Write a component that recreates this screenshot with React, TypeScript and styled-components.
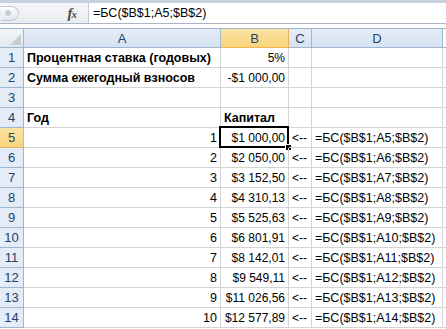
import styled, { createGlobalStyle, css } from "styled-components";

const GlobalStyle = createGlobalStyle`
  html, body {
    margin: 0;
    padding: 0;
    background: #ffffff;
    overflow: hidden;
  }
  body {
    font-family: "Liberation Sans", Arial, sans-serif;
  }
`;

const COLS = "24px 197px 68px 23px 131px 3px";

const Sheet = styled.div`
  width: 446px;
  height: 329px;
  overflow: hidden;
  background: #ffffff;
`;

const FormulaBar = styled.div`
  display: flex;
  height: 24px;
  border-top: 3px solid #c5d1de;
  border-bottom: 1px solid #a9b5c4;
  box-sizing: border-box;
  background: #ffffff;
`;

const FxArea = styled.div`
  width: 89px;
  display: flex;
  align-items: center;
  background: linear-gradient(#f6f7f9, #e9ecf0);
  border-right: 1px solid #c2c9d3;
  box-sizing: border-box;
`;

const Grip = styled.div`
  width: 18px;
  height: 15px;
  margin-left: 1px;
  border-radius: 0 8px 8px 0;
  border: 1px solid #c4cad3;
  border-left: none;
  background: linear-gradient(#ffffff, #e2e6eb);
  display: flex;
  align-items: center;
  padding-left: 4px;
  box-sizing: border-box;
`;

const Dot = styled.span`
  width: 6px;
  height: 6px;
  border-radius: 50%;
  background: #c9ced6;
`;

const Fx = styled.span`
  margin-left: auto;
  margin-right: 12px;
  font-family: "Liberation Serif", serif;
  font-style: italic;
  font-weight: bold;
  font-size: 15px;
  color: #4a4a4a;
  letter-spacing: -1px;

  small {
    font-size: 11px;
  }
`;

const FormulaText = styled.div`
  padding-left: 4px;
  display: flex;
  align-items: center;
  font-size: 12.5px;
  color: #000000;
`;

const Gap = styled.div`
  height: 4px;
  background: #ffffff;
  border-bottom: 1px solid #9eb6ce;
`;

const Grid = styled.div`
  display: grid;
  grid-template-columns: ${COLS};
  grid-auto-rows: 20px;
`;

const HeadRow = styled.div`
  display: grid;
  grid-template-columns: ${COLS};
  height: 19px;
`;

const Corner = styled.div`
  position: relative;
  background: linear-gradient(#f4f6f9, #e3e8ef);
  border-right: 1px solid #9eb6ce;
  border-bottom: 1px solid #9eb6ce;
  box-sizing: border-box;

  &::after {
    content: "";
    position: absolute;
    right: 2px;
    bottom: 2px;
    border-left: 11px solid transparent;
    border-bottom: 11px solid #c6cdd6;
  }
`;

const ColHead = styled.div<{ $active?: boolean }>`
  display: flex;
  align-items: center;
  justify-content: center;
  font-size: 13px;
  color: #27416a;
  border-right: 1px solid #9eb6ce;
  border-bottom: 1px solid #9eb6ce;
  box-sizing: border-box;
  background: linear-gradient(#e4ecf7, #d7e3f2);
  ${({ $active }) =>
    $active &&
    css`
      background: linear-gradient(#fbe3a3, #f8d57e);
      border-bottom-color: #f2b44b;
      border-right-color: #e3b45c;
    `}
`;

const Filler = styled.div`
  background: #ffffff;
  border-bottom: 1px solid #9eb6ce;
`;

const RowHead = styled.div<{ $active?: boolean }>`
  display: flex;
  align-items: center;
  justify-content: center;
  font-size: 13px;
  color: #27416a;
  background: #e4ecf7;
  border-right: 1px solid #9eb6ce;
  border-bottom: 1px solid #9eb6ce;
  box-sizing: border-box;
  ${({ $active }) =>
    $active &&
    css`
      background: linear-gradient(#fbe3a3, #f8d57e);
      border-right-color: #f2b44b;
      border-bottom-color: #e3b45c;
    `}
`;

const Cell = styled.div<{
  $align?: "left" | "right";
  $bold?: boolean;
  $size?: number;
  $selected?: boolean;
}>`
  position: relative;
  display: flex;
  align-items: center;
  justify-content: ${({ $align }) => ($align === "right" ? "flex-end" : "flex-start")};
  padding: 1px 3px 0;
  font-size: ${({ $size }) => $size ?? 12}px;
  font-weight: ${({ $bold }) => ($bold ? 700 : 400)};
  color: #000000;
  white-space: nowrap;
  border-right: 1px solid #d4d4d4;
  border-bottom: 1px solid #d4d4d4;
  box-sizing: border-box;
  ${({ $selected }) =>
    $selected &&
    css`
      &::before {
        content: "";
        position: absolute;
        left: -2px;
        top: -2px;
        right: -1px;
        bottom: -1px;
        border: 2px solid #000000;
        pointer-events: none;
      }
      &::after {
        content: "";
        position: absolute;
        right: -4px;
        bottom: -4px;
        width: 5px;
        height: 5px;
        background: #000000;
        border: 1px solid #ffffff;
      }
    `}
`;

const Edge = styled.div`
  border-bottom: 1px solid #d4d4d4;
`;

const money = [
  "$1 000,00",
  "$2 050,00",
  "$3 152,50",
  "$4 310,13",
  "$5 525,63",
  "$6 801,91",
  "$8 142,01",
  "$9 549,11",
  "$11 026,56",
  "$12 577,89",
];

type Row = {
  a?: string;
  aAlign?: "left" | "right";
  b?: string;
  bold?: boolean;
  c?: string;
  d?: string;
};

const rows: Row[] = [
  { a: "Процентная ставка (годовых)", aAlign: "left", b: "5%", bold: true },
  { a: "Сумма ежегодный взносов", aAlign: "left", b: "-$1 000,00", bold: true },
  {},
  { a: "Год", aAlign: "left", b: "Капитал", bold: true },
  ...money.map((m, i) => ({
    a: String(i + 1),
    aAlign: "right" as const,
    b: m,
    c: "<--",
    d: `=БС($B$1;A${i + 5};$B$2)`,
  })),
];

export default function App() {
  return (
    <Sheet>
      <GlobalStyle />
      <FormulaBar>
        <FxArea>
          <Grip>
            <Dot />
          </Grip>
          <Fx>
            f<small>x</small>
          </Fx>
        </FxArea>
        <FormulaText>=БС($B$1;A5;$B$2)</FormulaText>
      </FormulaBar>
      <Gap />
      <HeadRow>
        <Corner />
        <ColHead>A</ColHead>
        <ColHead $active>B</ColHead>
        <ColHead>C</ColHead>
        <ColHead>D</ColHead>
        <Filler />
      </HeadRow>
      <Grid>
        {rows.map((r, i) => {
          const n = i + 1;
          const isHead = n === 4;
          return [
            <RowHead key={`h${n}`} $active={n === 5}>
              {n}
            </RowHead>,
            <Cell
              key={`a${n}`}
              $align={r.aAlign}
              $bold={r.bold}
              $size={r.bold ? 12.5 : 12.5}
            >
              {r.a}
            </Cell>,
            <Cell
              key={`b${n}`}
              $align={isHead ? "left" : "right"}
              $bold={isHead}
              $size={isHead ? 12.5 : 12}
              $selected={n === 5}
            >
              {r.b}
            </Cell>,
            <Cell key={`c${n}`}>{r.c}</Cell>,
            <Cell key={`d${n}`} $size={12.5}>
              {r.d}
            </Cell>,
            <Edge key={`e${n}`} />,
          ];
        })}
      </Grid>
    </Sheet>
  );
}
